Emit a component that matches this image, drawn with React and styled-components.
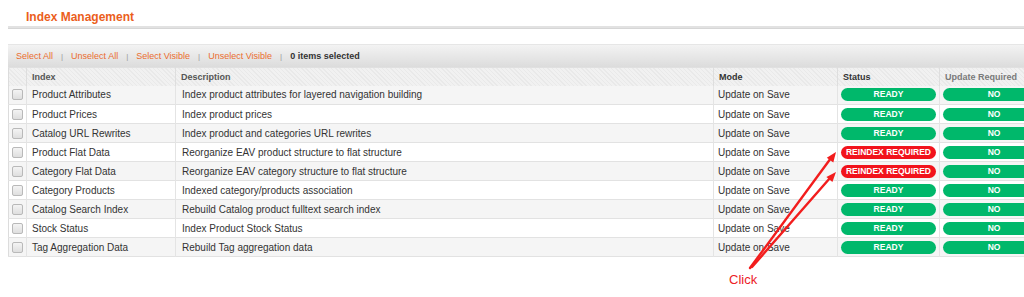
import styled, { createGlobalStyle } from 'styled-components';

const GlobalStyle = createGlobalStyle`
  html, body {
    margin: 0;
    padding: 0;
    background: #fff;
    overflow: hidden;
  }
  body {
    font-family: "Liberation Sans", Arial, sans-serif;
    color: #333;
  }
`;

const Page = styled.div`
  position: relative;
  width: 1016px;
  height: 297px;
  padding-left: 8px;
  overflow: hidden;
`;

const Header = styled.div`
  height: 26px;
  box-sizing: border-box;
  padding: 10px 0 0 18px;
`;

const Title = styled.h2`
  margin: 0;
  font-size: 12px;
  line-height: 14px;
  font-weight: bold;
  color: #eb5e1c;
`;

const Rule = styled.div`
  width: 1040px;
  height: 2px;
  background: #e2e2e2;
  border-bottom: 1px solid #d6d6d6;
  margin-bottom: 15px;
`;

const Grid = styled.div`
  width: 1040px;
`;

const Toolbar = styled.div`
  height: 22px;
  display: flex;
  align-items: center;
  gap: 8px;
  padding-left: 8px;
  background: linear-gradient(#f3f3f3, #dcdcdc);
  border-top: 1px solid #e6e6e6;
  font-size: 9px;
`;

const ToolLink = styled.span`
  color: #eb6d2f;
`;

const Sep = styled.span`
  color: #9a9a9a;
  font-size: 8px;
`;

const Count = styled.span`
  font-weight: bold;
  color: #333;
`;

const Table = styled.table`
  width: 1040px;
  table-layout: fixed;
  border-collapse: collapse;
  border-left: 1px solid #dcdcdc;
  border-bottom: 1px solid #dcdcdc;
`;

const HeadRow = styled.tr`
  height: 18px;
  background: repeating-linear-gradient(
    45deg,
    #e9e9e9 0px,
    #e9e9e9 1px,
    #f1f1f1 1px,
    #f1f1f1 3px
  );
`;

const Th = styled.th`
  text-align: left;
  font-size: 9px;
  font-weight: bold;
  color: ${(p) => p.$muted ? '#7a7a7a' : p.$dark ? '#333' : '#555'};
  padding: 0 5px;
  border-right: 1px solid #dedede;
  border-top: 1px solid #e0e0e0;
  white-space: nowrap;
  overflow: hidden;
`;

const Row = styled.tr`
  height: 19px;
  background: ${(p) => (p.$odd ? '#f5f5f5' : '#fff')};
  border-bottom: 1px solid #e2e2e2;
`;

const Td = styled.td`
  font-size: 10px;
  color: #333;
  padding: 0 ${(p) => p.$pad ?? 5}px;
  border-right: 1px solid #e4e4e4;
  white-space: nowrap;
  overflow: hidden;
`;

const Check = styled.span`
  display: block;
  width: 9px;
  height: 9px;
  margin-left: 3px;
  border: 1px solid #b9b9b9;
  border-radius: 2px;
  background: linear-gradient(#f4f4f4, #dedede);
`;

const Badge = styled.div`
  height: 13px;
  line-height: 13px;
  border-radius: 7px;
  background: ${(p) => (p.$alert ? '#f2131c' : '#00b86b')};
  color: #fff;
  font-size: 8.5px;
  font-weight: bold;
  text-align: center;
  white-space: nowrap;
`;

const Overlay = styled.svg`
  position: absolute;
  left: 0;
  top: 0;
  width: 1024px;
  height: 297px;
  pointer-events: none;
`;

const Note = styled.div`
  position: absolute;
  left: 729px;
  top: 272px;
  font-size: 13px;
  color: #ec2026;
`;

const rows = [
  ['Product Attributes', 'Index product attributes for layered navigation building', false],
  ['Product Prices', 'Index product prices', false],
  ['Catalog URL Rewrites', 'Index product and categories URL rewrites', false],
  ['Product Flat Data', 'Reorganize EAV product structure to flat structure', true],
  ['Category Flat Data', 'Reorganize EAV category structure to flat structure', true],
  ['Category Products', 'Indexed category/products association', false],
  ['Catalog Search Index', 'Rebuild Catalog product fulltext search index', false],
  ['Stock Status', 'Index Product Stock Status', false],
  ['Tag Aggregation Data', 'Rebuild Tag aggregation data', false],
];

export default function App() {
  return (
    <>
      <GlobalStyle />
      <Page>
        <Header>
          <Title>Index Management</Title>
        </Header>
        <Rule />
        <Grid>
          <Toolbar>
            <ToolLink>Select All</ToolLink>
            <Sep>|</Sep>
            <ToolLink>Unselect All</ToolLink>
            <Sep>|</Sep>
            <ToolLink>Select Visible</ToolLink>
            <Sep>|</Sep>
            <ToolLink>Unselect Visible</ToolLink>
            <Sep>|</Sep>
            <Count>0 items selected</Count>
          </Toolbar>
          <Table>
            <colgroup>
              <col style={{ width: 18 }} />
              <col style={{ width: 149 }} />
              <col style={{ width: 538 }} />
              <col style={{ width: 124 }} />
              <col style={{ width: 102 }} />
              <col style={{ width: 109 }} />
            </colgroup>
            <thead>
              <HeadRow>
                <Th />
                <Th>Index</Th>
                <Th>Description</Th>
                <Th $dark>Mode</Th>
                <Th $dark>Status</Th>
                <Th $muted>Update Required</Th>
              </HeadRow>
            </thead>
            <tbody>
              {rows.map(([name, desc, alert], i) => (
                <Row key={name} $odd={i % 2 === 0}>
                  <Td $pad={0}>
                    <Check />
                  </Td>
                  <Td>{name}</Td>
                  <Td $pad={6}>{desc}</Td>
                  <Td $pad={4}>Update on Save</Td>
                  <Td $pad={3}>
                    <Badge $alert={alert}>{alert ? 'REINDEX REQUIRED' : 'READY'}</Badge>
                  </Td>
                  <Td $pad={3}>
                    <Badge>NO</Badge>
                  </Td>
                </Row>
              ))}
            </tbody>
          </Table>
        </Grid>
        <Overlay viewBox="0 0 1024 297">
          <g stroke="#f21d1d" strokeWidth="2.4" strokeLinecap="round">
            <line x1="750" y1="268" x2="831" y2="158" />
            <line x1="752" y1="267" x2="830" y2="178" />
          </g>
          <g fill="#f21d1d">
            <polygon points="836,152 833.3,162.4 826.8,157.7" />
            <polygon points="836,172 832.4,182.1 826.4,176.9" />
          </g>
        </Overlay>
        <Note>Click</Note>
      </Page>
    </>
  );
}
